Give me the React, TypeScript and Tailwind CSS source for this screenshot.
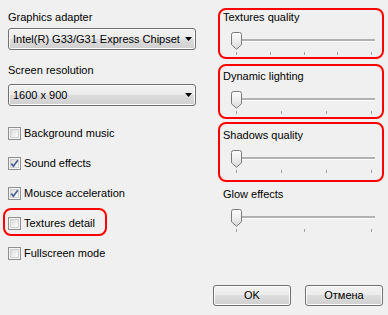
import React from 'react';

const btnBg =
  'border border-[#707070] rounded-[3px] bg-[linear-gradient(to_bottom,#f2f2f2_0%,#ebebeb_50%,#dddddd_50%,#cfcfcf_100%)] shadow-[inset_0_0_0_1px_#fbfbfb]';

const Dropdown: React.FC<{ value: string }> = ({ value }) => (
  <div className={`${btnBg} h-[22px] w-[188px] flex items-center justify-between pl-[4px] pr-[3px]`}>
    <span className="leading-[13px] whitespace-nowrap">{value}</span>
    <svg width="7" height="4" viewBox="0 0 7 4">
      <path d="M0 0 H7 L3.5 4 Z" fill="#000" />
    </svg>
  </div>
);

const CheckBox: React.FC<{ checked?: boolean }> = ({ checked }) => (
  <div className="w-[13px] h-[13px] border border-[#8e8f8f] bg-[#f4f4f4] p-[1px] shrink-0">
    <div className="w-full h-full bg-[linear-gradient(135deg,#dcdcdc_0%,#f0f0f0_60%,#fbfbfb_100%)] border border-[#d0d0d0] flex items-center justify-center">
      {checked && (
        <svg width="9" height="9" viewBox="0 0 9 9" className="-m-[1px]">
          <path d="M1.3 4.6 L3.4 7.2 L7.8 1.3" fill="none" stroke="#4a5d8f" strokeWidth="1.7" />
        </svg>
      )}
    </div>
  </div>
);

const CheckRow: React.FC<{ label: string; checked?: boolean; marked?: boolean }> = ({ label, checked, marked }) => (
  <div className="relative h-[13px] flex items-center gap-[3px]">
    <CheckBox checked={checked} />
    <span className="leading-[13px] whitespace-nowrap">{label}</span>
    {marked && (
      <div className="absolute -left-[5px] -top-[9px] w-[104px] h-[28px] border-2 border-[#ff0000] rounded-[8px]" />
    )}
  </div>
);

const Thumb = () => (
  <svg width="11" height="18" viewBox="0 0 11 18" className="absolute left-0 top-0">
    <defs>
      <linearGradient id="thumbFill" x1="0" y1="0" x2="0" y2="1">
        <stop offset="0" stopColor="#fdfdfd" />
        <stop offset="0.5" stopColor="#eeeeee" />
        <stop offset="1" stopColor="#d6d6d6" />
      </linearGradient>
    </defs>
    <path
      d="M0.5 2.5 Q0.5 0.5 2.5 0.5 H8.5 Q10.5 0.5 10.5 2.5 V12.8 L5.5 17.3 L0.5 12.8 Z"
      fill="url(#thumbFill)"
      stroke="#7a7a7a"
    />
  </svg>
);

interface SliderProps {
  label: string;
  ticks: number;
  box?: string;
}

const Slider: React.FC<SliderProps> = ({ label, ticks, box }) => (
  <div className="relative w-[152px]">
    <div className="leading-[13px] h-[13px] whitespace-nowrap">{label}</div>
    <div className="relative ml-[8px] mt-[8px] h-[18px] w-[144px]">
      <div className="absolute left-[5px] right-0 top-[7px] h-[3px] border-t-2 border-[#b1b1b1] border-b border-b-white" />
      <Thumb />
    </div>
    <div className="ml-[13px] mt-[2px] w-[136px] h-[3px] flex justify-between">
      {Array.from({ length: ticks }).map((_, i) => (
        <div key={i} className="w-px h-[3px] bg-[#a0a0a0]" />
      ))}
    </div>
    {box && <div className={`absolute border-2 border-[#ff0000] rounded-[8px] ${box}`} />}
  </div>
);

export default function App() {
  return (
    <div className="w-[388px] h-[315px] bg-[#f0f0f0] text-[11px] text-black font-['Liberation_Sans',Arial,sans-serif] flex flex-col overflow-hidden">
      <div className="flex">
        <div className="w-[196px] pl-[8px] pt-[11px] flex flex-col">
          <div className="leading-[13px] h-[13px]">Graphics adapter</div>
          <div className="mt-[4px]">
            <Dropdown value="Intel(R) G33/G31 Express Chipset" />
          </div>
          <div className="leading-[13px] h-[13px] mt-[14px]">Screen resolution</div>
          <div className="mt-[7px]">
            <Dropdown value="1600 x 900" />
          </div>
          <div className="mt-[21px] flex flex-col gap-[17px]">
            <CheckRow label="Background music" />
            <CheckRow label="Sound effects" checked />
            <CheckRow label="Mousce acceleration" checked />
            <CheckRow label="Textures detail" marked />
            <CheckRow label="Fullscreen mode" />
          </div>
        </div>
        <div className="flex-1 pl-[27px] pt-[11px] flex flex-col gap-[15px]">
          <Slider label="Textures quality" ticks={5} box="-left-[5px] -top-[3px] w-[166px] h-[51px]" />
          <Slider label="Dynamic lighting" ticks={4} box="-left-[5px] -top-[6px] w-[166px] h-[55px]" />
          <Slider label="Shadows quality" ticks={4} box="-left-[5px] -top-[7px] w-[166px] h-[60px]" />
          <Slider label="Glow effects" ticks={3} />
        </div>
      </div>
      <div className="mt-auto pb-[9px] pr-[5px] flex justify-end gap-[14px]">
        <button className={`${btnBg} w-[78px] h-[21px] leading-[13px]`}>OK</button>
        <button className={`${btnBg} w-[78px] h-[21px] leading-[13px]`}>Отмена</button>
      </div>
    </div>
  );
}
